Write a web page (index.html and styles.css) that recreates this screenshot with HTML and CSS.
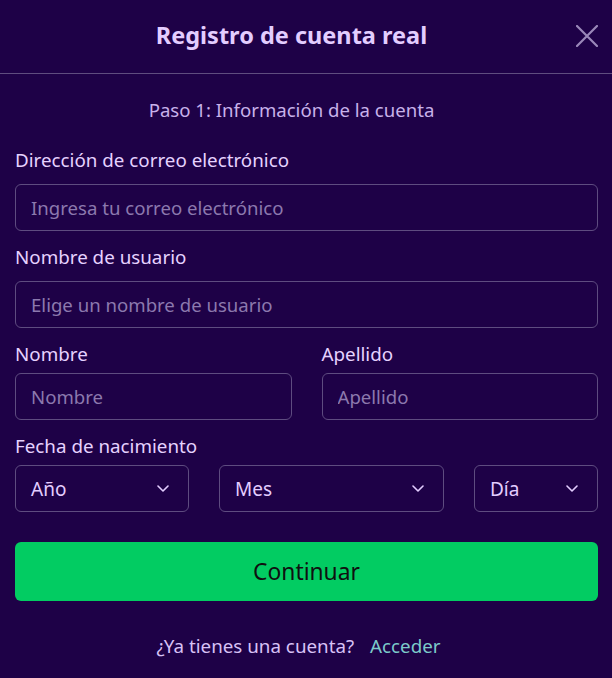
FILE: index.html
```html
<!DOCTYPE html>
<html lang="es">
<head>
<meta charset="utf-8">
<title>Registro de cuenta real</title>
<link rel="stylesheet" href="styles.css">
</head>
<body>
<div class="modal">
  <header class="modal-header">
    <h1 class="modal-title">Registro de cuenta real</h1>
    <button class="close-btn" aria-label="Cerrar">
      <svg width="22" height="22" viewBox="0 0 22 22"><path d="M1 1L21 21M21 1L1 21" stroke="currentColor" stroke-width="2.2" fill="none" stroke-linecap="round"/></svg>
    </button>
  </header>
  <form class="form">
    <p class="step">Paso 1: Información de la cuenta</p>

    <div class="field first">
      <label class="label">Dirección de correo electrónico</label>
      <input class="input" type="email" placeholder="Ingresa tu correo electrónico">
    </div>

    <div class="field">
      <label class="label">Nombre de usuario</label>
      <input class="input" type="text" placeholder="Elige un nombre de usuario">
    </div>

    <div class="row-2">
      <div class="field tight">
        <label class="label">Nombre</label>
        <input class="input" type="text" placeholder="Nombre">
      </div>
      <div class="field tight">
        <label class="label">Apellido</label>
        <input class="input" type="text" placeholder="Apellido">
      </div>
    </div>

    <div class="field tight">
      <label class="label">Fecha de nacimiento</label>
      <div class="row-3">
        <div class="select"><span>Año</span><svg class="chev" width="12" height="7" viewBox="0 0 12 7"><path d="M1 1L6 6L11 1" stroke="currentColor" stroke-width="1.6" fill="none" stroke-linecap="round" stroke-linejoin="round"/></svg></div>
        <div class="select"><span>Mes</span><svg class="chev" width="12" height="7" viewBox="0 0 12 7"><path d="M1 1L6 6L11 1" stroke="currentColor" stroke-width="1.6" fill="none" stroke-linecap="round" stroke-linejoin="round"/></svg></div>
        <div class="select"><span>Día</span><svg class="chev" width="12" height="7" viewBox="0 0 12 7"><path d="M1 1L6 6L11 1" stroke="currentColor" stroke-width="1.6" fill="none" stroke-linecap="round" stroke-linejoin="round"/></svg></div>
      </div>
    </div>

    <button class="submit" type="button">Continuar</button>

    <p class="footer">¿Ya tienes una cuenta? <a class="link" href="#">Acceder</a></p>
  </form>
</div>
</body>
</html>
```

FILE: styles.css
```css
* { box-sizing: border-box; }
html, body {
  margin: 0;
  padding: 0;
  background: #1e0147;
  font-family: "Noto Sans", "Open Sans", sans-serif;
}
.modal {
  width: 612px;
  height: 678px;
  background: #1e0147;
  color: #e6d2ff;
}
.modal-header {
  height: 74px;
  border-bottom: 1px solid #5f4d7f;
  display: flex;
  align-items: center;
  justify-content: center;
  padding-right: 29px;
  position: relative;
}
.modal-title {
  margin: 0;
  font-size: 23.5px;
  line-height: 30px;
  font-weight: 700;
  color: #e3cdff;
  padding-bottom: 4px;
}
.close-btn {
  position: absolute;
  right: 14px;
  top: 25px;
  width: 22px;
  height: 22px;
  padding: 0;
  border: 0;
  background: none;
  color: #9a88b9;
  display: flex;
}
.form {
  padding: 0 14px 0 15px;
  display: flex;
  flex-direction: column;
}
.step {
  margin: 23px 0 0;
  padding-right: 30px;
  text-align: center;
  font-size: 18.6px;
  line-height: 26px;
  color: #c8b2ea;
}
.field {
  display: flex;
  flex-direction: column;
  min-width: 0;
  margin-top: 13px;
}
.field.first { margin-top: 24px; }
.label {
  font-size: 18.8px;
  line-height: 26px;
  color: #e6d2ff;
  margin-bottom: 11px;
}
.field.tight .label { margin-bottom: 6px; }
.input {
  width: 100%;
  min-width: 0;
  height: 47px;
  border: 1px solid #5e4c80;
  border-radius: 6px;
  background: transparent;
  padding: 0 15px;
  font-family: inherit;
  font-size: 18.6px;
  color: #e6d2ff;
  outline: none;
}
.input::placeholder { color: #8c79ae; }
.row-2 {
  display: grid;
  grid-template-columns: minmax(0, 1fr) minmax(0, 1fr);
  column-gap: 30px;
}
.row-3 {
  display: grid;
  grid-template-columns: 174fr 225fr 124fr;
  column-gap: 30px;
}
.select {
  height: 47px;
  border: 1px solid #5e4c80;
  border-radius: 6px;
  display: flex;
  align-items: center;
  justify-content: space-between;
  padding: 0 19px 0 15px;
  font-size: 19px;
  color: #e3cdff;
}
.chev { color: #e3cdff; }
.submit {
  margin-top: 30px;
  height: 59px;
  border: 0;
  border-radius: 6px;
  background: #02cc62;
  color: #101010;
  font-family: inherit;
  font-size: 22.8px;
}
.footer {
  margin: 32px 0 0;
  padding-right: 16px;
  text-align: center;
  font-size: 18.8px;
  line-height: 26px;
  color: #d8c2f6;
}
.link {
  color: #7ccaca;
  text-decoration: none;
  margin-left: 11px;
}
```
